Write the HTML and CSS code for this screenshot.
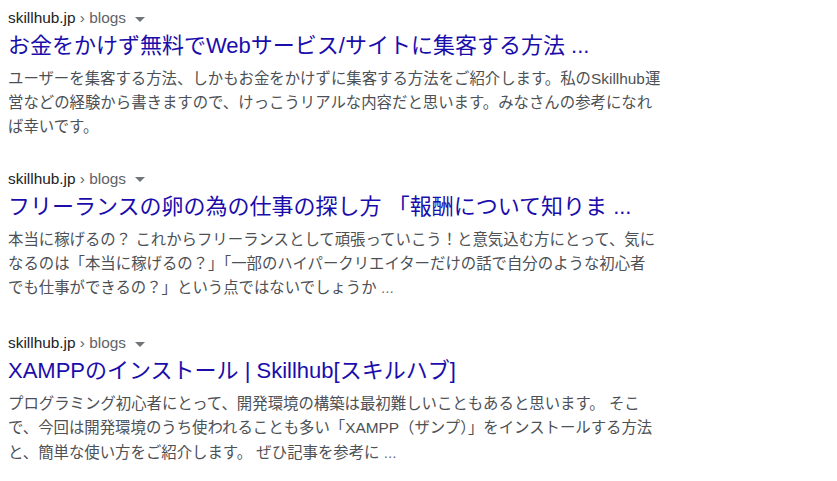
FILE: index.html
```html
<!DOCTYPE html>
<html lang="ja">
<head>
<meta charset="utf-8">
<title>skillhub.jp blogs</title>
<link rel="stylesheet" href="styles.css">
</head>
<body>
<div class="results">
  <div class="result">
    <div class="cite"><span class="host">skillhub.jp</span><span class="path"> › blogs</span><span class="caret"></span></div>
    <h3 class="title">お金をかけず無料でWebサービス/サイトに集客する方法 ...</h3>
    <div class="snippet">ユーザーを集客する方法、しかもお金をかけずに集客する方法をご紹介します。私のSkillhub運<br>営などの経験から書きますので、けっこうリアルな内容だと思います。みなさんの参考になれ<br>ば幸いです。</div>
  </div>
  <div class="result second">
    <div class="cite"><span class="host">skillhub.jp</span><span class="path"> › blogs</span><span class="caret"></span></div>
    <h3 class="title">フリーランスの卵の為の仕事の探し方 「報酬について知りま ...</h3>
    <div class="snippet">本当に稼げるの？ これからフリーランスとして頑張っていこう！と意気込む方にとって、気に<br>なるのは「本当に稼げるの？」「一部のハイパークリエイターだけの話で自分のような初心者<br>でも仕事ができるの？」という点ではないでしょうか <span class="ell">...</span></div>
  </div>
  <div class="result third">
    <div class="cite"><span class="host">skillhub.jp</span><span class="path"> › blogs</span><span class="caret"></span></div>
    <h3 class="title">XAMPPのインストール | Skillhub[スキルハブ]</h3>
    <div class="snippet">プログラミング初心者にとって、開発環境の構築は最初難しいこともあると思います。 そこ<br>で、今回は開発環境のうち使われることも多い「XAMPP（ザンプ）」をインストールする方法<br>と、簡単な使い方をご紹介します。 ぜひ記事を参考に <span class="ell">...</span></div>
  </div>
</div>
</body>
</html>
```
FILE: styles.css
```css
html, body {
  margin: 0;
  padding: 0;
  background: #ffffff;
}
body {
  font-family: "Liberation Sans", Arial, "Noto Sans CJK JP", sans-serif;
}
.results {
  padding: 8px 8px 0 8px;
  display: flex;
  flex-direction: column;
}
.result {
  width: 680px;
}
.second {
  margin-top: 29px;
}
.third {
  margin-top: 33px;
}
.cite {
  font-size: 15.4px;
  line-height: 20px;
  color: #202124;
  display: flex;
  align-items: center;
}
.path {
  color: #5f6368;
  white-space: pre;
}
.caret {
  width: 0;
  height: 0;
  border-left: 5px solid transparent;
  border-right: 5px solid transparent;
  border-top: 5px solid #70757a;
  margin-left: 9px;
  margin-top: 2px;
}
.title {
  margin: 3px 0 7px 0;
  font-size: 22px;
  line-height: 29px;
  font-weight: normal;
  color: #1a0dab;
}
.snippet {
  font-size: 15.4px;
  line-height: 24.2px;
  color: #4d5156;
  white-space: nowrap;
}
.ell {
  color: #70757a;
}
```
